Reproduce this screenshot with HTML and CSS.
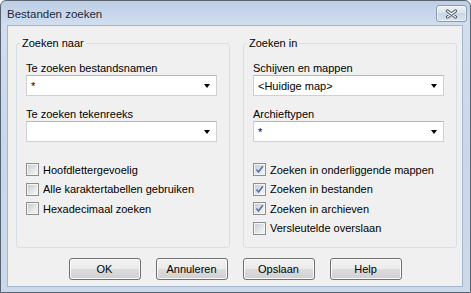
FILE: index.html
```html
<!DOCTYPE html>
<html lang="nl">

<head>
    <meta charset="UTF-8">
    <title>Bestanden zoeken</title>
    <link rel="stylesheet" href="styles.css">
</head>

<body>
    <div class="window">
        <div class="titlebar">
            <span class="title">Bestanden zoeken</span>
            <button class="close-btn">
                <svg width="13" height="10" viewBox="0 0 13 10">
                    <path d="M2.5 2 L10.5 8 M10.5 2 L2.5 8" stroke="#4d5560" stroke-width="3.2" stroke-linecap="round" fill="none"/>
                    <path d="M2.5 2 L10.5 8 M10.5 2 L2.5 8" stroke="#f7f9fb" stroke-width="1.4" stroke-linecap="round" fill="none"/>
                </svg>
            </button>
        </div>
        <div class="frame">
            <div class="client">
                <div class="panels">
                    <!-- Zoeken naar -->
                    <fieldset class="group">
                        <legend>Zoeken naar</legend>
                        <label class="field-label">Te zoeken bestandsnamen</label>
                        <div class="combo"><span class="value">*</span><span class="arrow"></span></div>
                        <label class="field-label spaced">Te zoeken tekenreeks</label>
                        <div class="combo"><span class="value"></span><span class="arrow"></span></div>
                        <div class="checks">
                            <label class="check"><span class="box"></span>Hoofdlettergevoelig</label>
                            <label class="check"><span class="box"></span>Alle karaktertabellen gebruiken</label>
                            <label class="check"><span class="box"></span>Hexadecimaal zoeken</label>
                        </div>
                    </fieldset>

                    <!-- Zoeken in -->
                    <fieldset class="group">
                        <legend>Zoeken in</legend>
                        <label class="field-label">Schijven en mappen</label>
                        <div class="combo"><span class="value">&lt;Huidige map&gt;</span><span class="arrow"></span></div>
                        <label class="field-label spaced">Archieftypen</label>
                        <div class="combo"><span class="value">*</span><span class="arrow"></span></div>
                        <div class="checks">
                            <label class="check"><span class="box"><svg width="9" height="9" viewBox="0 0 9 9"><path d="M1.5 4.5 L3.6 7 L7.8 1.2" stroke="#5370ab" stroke-width="1.6" fill="none"/></svg></span>Zoeken in onderliggende mappen</label>
                            <label class="check"><span class="box"><svg width="9" height="9" viewBox="0 0 9 9"><path d="M1.5 4.5 L3.6 7 L7.8 1.2" stroke="#5370ab" stroke-width="1.6" fill="none"/></svg></span>Zoeken in bestanden</label>
                            <label class="check"><span class="box"><svg width="9" height="9" viewBox="0 0 9 9"><path d="M1.5 4.5 L3.6 7 L7.8 1.2" stroke="#5370ab" stroke-width="1.6" fill="none"/></svg></span>Zoeken in archieven</label>
                            <label class="check"><span class="box"></span>Versleutelde overslaan</label>
                        </div>
                    </fieldset>
                </div>

                <div class="buttons">
                    <button class="btn">OK</button>
                    <button class="btn">Annuleren</button>
                    <button class="btn">Opslaan</button>
                    <button class="btn">Help</button>
                </div>
            </div>
        </div>
    </div>
</body>

</html>
```

FILE: styles.css
```css
body {
    margin: 0;
    font-family: "Liberation Sans", Arial, sans-serif;
    font-size: 11px;
    color: #000;
    background: #fff;
}

/* window chrome */
.window {
    width: 471px;
    height: 293px;
    box-sizing: border-box;
    border: 1px solid #5a6470;
    border-radius: 6px 6px 0 0;
    background: linear-gradient(#bdcee5, #d1def0 24px, #c8d7ea 50%, #cbd9eb);
    display: flex;
    flex-direction: column;
    overflow: hidden;
}

.titlebar {
    height: 24px;
    flex: none;
    display: flex;
    justify-content: space-between;
    align-items: flex-start;
    padding: 0 3px 0 6px;
}

.title {
    margin-top: 6px;
    line-height: 14px;
    font-size: 11.5px;
    color: #1e2a38;
}

.close-btn {
    margin-top: 4px;
    width: 31px;
    height: 17px;
    box-sizing: border-box;
    padding: 0;
    border: 1px solid #8a9ab0;
    border-radius: 3px;
    background: linear-gradient(#eef3f9, #d8e2ee 50%, #c9d6e7 50%, #dbe5f1);
    box-shadow: inset 0 0 0 1px rgba(255, 255, 255, 0.5);
    display: flex;
    align-items: center;
    justify-content: center;
}

.frame {
    flex: 1;
    display: flex;
    padding: 0 7px 5px 6px;
}

.client {
    flex: 1;
    border: 1px solid #a7b7cb;
    background: #f0f0f0;
    padding-top: 11px;
}

/* group boxes */
.panels {
    display: grid;
    grid-template-columns: 214px 214px;
    gap: 13px;
    height: 211px;
    margin-left: 8px;
}

.group {
    margin: 0;
    padding: 12px 12px 0 9px;
    border: 1px solid #d5dfe5;
    border-radius: 3px;
    min-width: 0;
    box-sizing: border-box;
    height: 211px;
}

.group legend {
    padding: 0 2px;
    margin-left: -6px;
    line-height: 13px;
}

.field-label {
    display: block;
    line-height: 13px;
}

.field-label.spaced {
    margin-top: 12px;
}

.combo {
    height: 21px;
    box-sizing: border-box;
    border: 1px solid #cdd0d5;
    border-top-color: #b5b9bf;
    background: #fff;
    display: flex;
    align-items: center;
    justify-content: space-between;
    padding: 0 6px 0 4px;
}

.arrow {
    width: 0;
    height: 0;
    border-left: 3.5px solid transparent;
    border-right: 3.5px solid transparent;
    border-top: 4px solid #000;
    margin-top: 1px;
}

/* checkboxes */
.checks {
    margin-top: 18px;
}

.check {
    display: flex;
    align-items: center;
    gap: 4px;
    height: 19.5px;
}

.box {
    width: 13px;
    height: 13px;
    box-sizing: border-box;
    border: 1px solid #8e8f8f;
    background: linear-gradient(135deg, #c3c8ce, #eceded 70%, #f6f6f6);
    box-shadow: inset 0 0 0 1px #f4f4f4;
    display: flex;
    align-items: center;
    justify-content: center;
}

/* buttons */
.buttons {
    display: flex;
    justify-content: center;
    gap: 15px;
    margin-top: 10px;
}

.btn {
    width: 72px;
    height: 22px;
    padding: 0;
    font-family: inherit;
    font-size: 11px;
    color: #000;
    border: 1px solid #707070;
    border-radius: 3px;
    background: linear-gradient(#f2f2f2, #ebebeb 50%, #dddddd 50%, #cfcfcf);
    box-shadow: inset 0 0 0 1px #fbfbfb;
}
```
